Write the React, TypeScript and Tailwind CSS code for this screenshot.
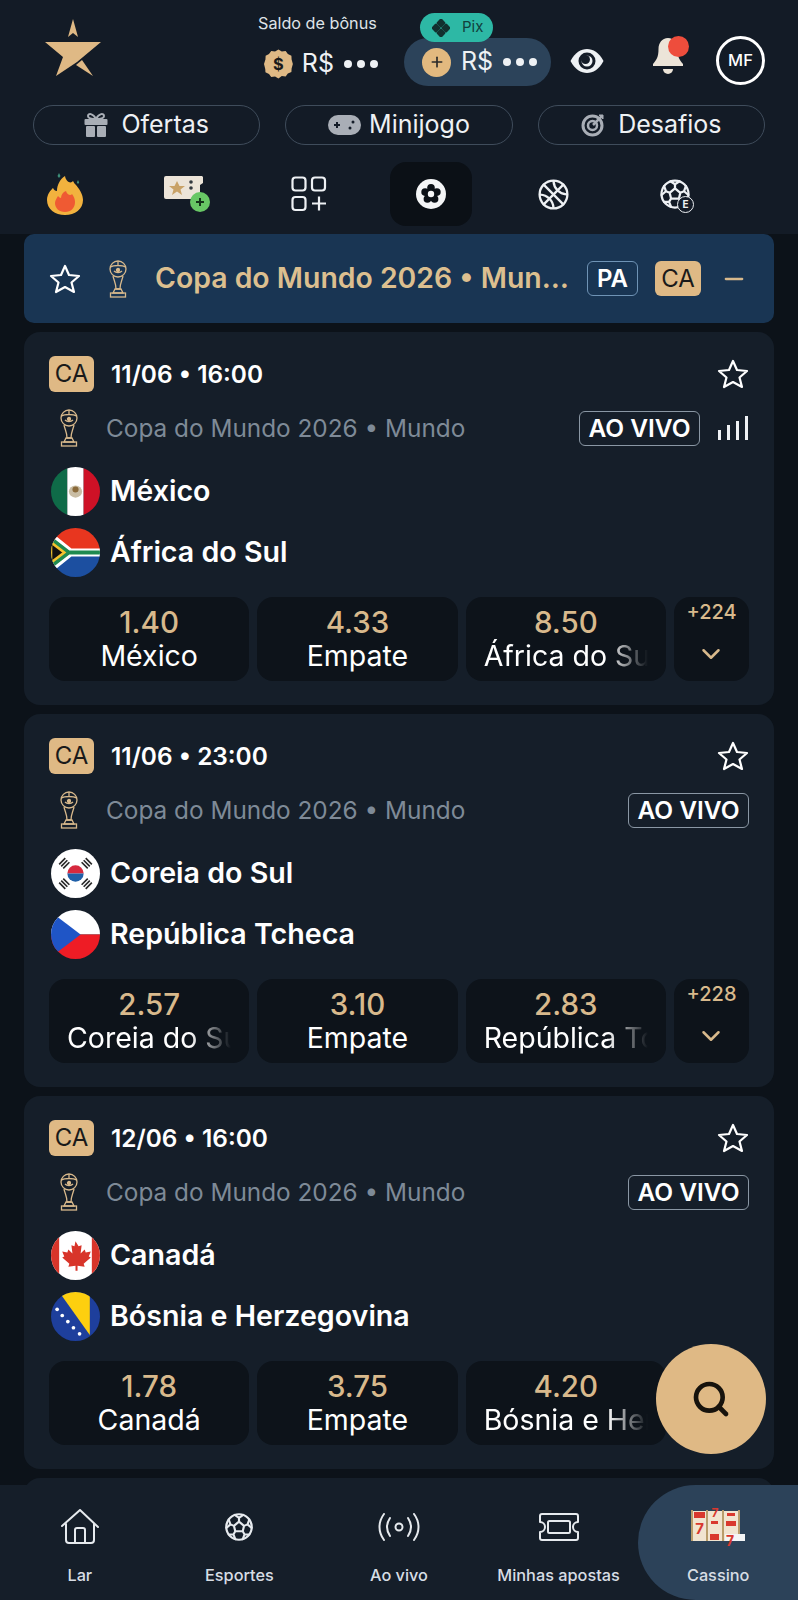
import React from "react";
import { ChevronDown, Minus, Plus, Search } from "lucide-react";
import { IoBasketballOutline, IoFootballOutline } from "react-icons/io5";

const Logo = () => (
	<svg width="58" height="58" viewBox="0 0 58 58" fill="#dfb985">
		<polygon points="29,0 34,18 29,14 24,18" />
		<polygon points="1,23 57,23 33,43 12,57 19,38" />
		<polygon points="38,41 49,57 32,46" />
	</svg>
);

const Coin = () => (
	<svg width="30" height="30" viewBox="0 0 30 30">
		<path
			d="M15 0l3.500 2 4-.6 2.300 3.300 3.700 1.600.2 4L30 15l-1.300 4.700-.2 3.500-3.700 1.600-2.300 3.300-4-.6L15 30l-3.500-2-4 .6-2.300-3.300-3.700-1.600-.2-3.500L0 15l1.500-4.700.2-4 3.500-1.600L7.500 1.400l4 .6z"
			fill="#dfb985"
		/>
		<text x="15" y="21" textAnchor="middle" fontSize="17" fontWeight="700" fill="#1a1a1a" fontFamily="Inter, sans-serif">
			$
		</text>
	</svg>
);

const Dots = () => (
	<div className="flex items-center gap-[5px]">
		<span className="w-[8px] h-[8px] rounded-full bg-[#eef1f4]" />
		<span className="w-[8px] h-[8px] rounded-full bg-[#eef1f4]" />
		<span className="w-[8px] h-[8px] rounded-full bg-[#eef1f4]" />
	</div>
);

const PixIcon = () => (
	<svg width="18" height="18" viewBox="0 0 18 18" fill="#12302f">
		<rect x="5.500" y="0.500" width="7" height="7" rx="1.500" transform="rotate(45 9 4)" />
		<rect x="5.500" y="10.500" width="7" height="7" rx="1.500" transform="rotate(45 9 14)" />
		<rect x="0.500" y="5.500" width="7" height="7" rx="1.500" transform="rotate(45 4 9)" />
		<rect x="10.500" y="5.500" width="7" height="7" rx="1.500" transform="rotate(45 14 9)" />
	</svg>
);

const Eye = () => (
	<svg width="34" height="26" viewBox="0 0 34 26">
		<path d="M0.500 13C5 4.500 11 1 17 1s12 3.500 16.500 12C29 21.500 23 25 17 25S5 21.500 0.500 13z" fill="#eef1f4" />
		<circle cx="17" cy="13" r="8.500" fill="#141c28" />
		<circle cx="17" cy="13" r="5.500" fill="#eef1f4" />
		<circle cx="15.500" cy="11.500" r="4.500" fill="#141c28" />
	</svg>
);

const Bell = () => (
	<svg width="30" height="42" viewBox="0 0 30 42">
		<path d="M15 3c6 0 9.500 5 9.500 11 0 8 2 11 5.500 15v2H0v-2c3.500-4 5.500-7 5.500-15C5.500 8 9 3 15 3z" fill="#ece4d8" />
		<path d="M10 34h10a5 5 0 0 1-10 0z" fill="#ece4d8" />
	</svg>
);

const Gift = () => (
	<svg width="24" height="24" viewBox="0 0 24 24" fill="#a9aeb6">
		<rect x="0.500" y="6" width="23" height="6" rx="1" />
		<rect x="2" y="13" width="9" height="11" rx="1" />
		<rect x="13" y="13" width="9" height="11" rx="1" />
		<path d="M12 6C9 0 4 0 4 3c0 2.500 4 3 8 3zM12 6c3-6 8-6 8-3 0 2.500-4 3-8 3z" fill="none" stroke="#a9aeb6" strokeWidth="2" />
	</svg>
);

const Gamepad = () => (
	<svg width="33" height="20" viewBox="0 0 33 20">
		<rect x="0" y="0" width="33" height="20" rx="10" fill="#a9aeb6" />
		<path d="M6 10h6M9 7v6" stroke="#141c28" strokeWidth="2" />
		<circle cx="25" cy="7" r="1.500" fill="#141c28" />
		<circle cx="22" cy="13" r="1.500" fill="#141c28" />
	</svg>
);

const Target = () => (
	<svg width="24" height="24" viewBox="0 0 24 24" fill="none" stroke="#a9aeb6">
		<circle cx="11.500" cy="12.500" r="9.500" strokeWidth="3" />
		<circle cx="11.500" cy="12.500" r="4.500" strokeWidth="2.500" />
		<path d="M12 12L21 3" strokeWidth="2.500" />
		<path d="M18 2h4v4z" fill="#a9aeb6" strokeWidth="1" />
	</svg>
);

const Flame = () => (
	<svg width="36" height="42" viewBox="0 0 36 42">
		<path d="M18 3c1 6 6 8 8 5 1 2 2 3 3 4 5 6 7 11 7 15 0 9-8 15-18 15S0 36 0 27c0-6 4-10 6-12 1 2 2 3 4 3 0-6 3-12 8-15z" fill="#f2b23e" />
		<path d="M19 18c1 4 5 5 6 3 2 3 3 5 3 8 0 6-4 10-10 10S8 35 8 30c0-3 2-5 3-7 1 1 2 2 3 2 0-3 2-6 5-7z" fill="#ef5a33" />
		<path d="M12 0l1.500 3-1.500 2-1.500-2zM31 7l1.200 2.500-1.200 1.500-1.200-1.500z" fill="#3d8f7a" />
	</svg>
);

const Tickets = () => (
	<svg width="46" height="36" viewBox="0 0 46 36">
		<path d="M2 0h36l1 1v6l-3 2v14H2a2 2 0 0 1-2-2V2a2 2 0 0 1 2-2z" fill="#ece4d8" />
		<polygon points="13,5 15.500,10 21,10 16.500,13.500 18,19 13,15.500 8,19 9.500,13.500 5,10 10.500,10" fill="#c9a267" />
		<circle cx="27" cy="6" r="1.800" fill="#33393f" />
		<circle cx="27" cy="12" r="1.800" fill="#33393f" />
		<circle cx="36" cy="26" r="10" fill="#68c765" />
		<path d="M32 26h8M36 22v8" stroke="#14331a" strokeWidth="2" />
	</svg>
);

const Grid = () => (
	<svg width="36" height="36" viewBox="0 0 36 36" fill="none" stroke="#eef1f4" strokeWidth="2.200">
		<rect x="1.500" y="1.500" width="13" height="13" rx="3" />
		<rect x="21" y="1.500" width="13" height="13" rx="3" />
		<rect x="1.500" y="21" width="13" height="13" rx="3" />
		<path d="M21 27.500h14M28 20.500v14" />
	</svg>
);

const SoccerSolid = () => (
	<svg width="30" height="30" viewBox="0 0 30 30">
		<circle cx="15" cy="15" r="15" fill="#f4f5f6" />
		<g fill="#0b1016">
			<circle cx="15" cy="15" r="6.500" />
			<circle cx="15" cy="8.800" r="3.800" />
			<circle cx="20.900" cy="13.100" r="3.800" />
			<circle cx="18.600" cy="20" r="3.800" />
			<circle cx="11.400" cy="20" r="3.800" />
			<circle cx="9.100" cy="13.100" r="3.800" />
		</g>
		<circle cx="15" cy="15" r="3.200" fill="#f4f5f6" />
	</svg>
);

const SoccerE = () => (
	<div className="relative w-[36px] h-[36px]">
		<IoFootballOutline size={36} color="#eef1f4" />
		<div className="absolute right-[-1px] bottom-[-1px] w-[17px] h-[17px] rounded-full bg-[#141c28] border border-[#eef1f4] flex items-center justify-center text-[10px] font-bold text-[#eef1f4]">
			E
		</div>
	</div>
);

const Trophy = ({ color = "#d8b98c" }: { color?: string }) => (
	<svg width="20" height="38" viewBox="0 0 20 38" fill="none" stroke={color} strokeWidth="1.300">
		<circle cx="10" cy="9" r="8" />
		<path d="M2.500 7c3-2 12-2 15 0M6 11c2 2 6 2 8 0M10 1v4" />
		<circle cx="10" cy="10" r="1.500" fill={color} />
		<path d="M5 16c1 5 3 7 3 13h4c0-6 2-8 3-13" />
		<path d="M7 29h6l2 4H5z" />
		<rect x="2.500" y="33" width="15" height="4" />
	</svg>
);

const StarIcon = () => (
	<svg width="32" height="30" viewBox="0 0 32 30" fill="none" stroke="#ffffff" strokeWidth="2.200" strokeLinejoin="round">
		<polygon points="16,2 20,11 30,12 22.500,18.500 25,28 16,23 7,28 9.500,18.500 2,12 12,11" />
	</svg>
);

const Signal = () => (
	<div className="flex items-end gap-[6px] h-[24px]">
		<span className="w-[3px] h-[10px] bg-[#eef1f4]" />
		<span className="w-[3px] h-[15px] bg-[#eef1f4]" />
		<span className="w-[3px] h-[19px] bg-[#eef1f4]" />
		<span className="w-[3px] h-[24px] bg-[#eef1f4]" />
	</div>
);

const Mexico = () => (
	<svg viewBox="0 0 48 48" className="w-full h-full">
		<rect width="16" height="48" fill="#0f6b48" />
		<rect x="16" width="16" height="48" fill="#ffffff" />
		<rect x="32" width="16" height="48" fill="#ce1126" />
		<ellipse cx="24" cy="24" rx="6.500" ry="6" fill="#c9bda4" />
		<circle cx="24" cy="22" r="3" fill="#8a6a3a" />
	</svg>
);

const SouthAfrica = () => (
	<svg viewBox="0 0 48 48" className="w-full h-full">
		<rect width="48" height="24" fill="#e8361f" />
		<rect y="24" width="48" height="24" fill="#1c4fa0" />
		<path d="M0 4l20 16h28v8H20L0 44z" fill="#ffffff" />
		<path d="M0 8l18 14h30v4H18L0 40z" fill="#1f8a50" />
		<path d="M0 14l13 10L0 34z" fill="#111111" stroke="#f5c22e" strokeWidth="2.500" />
	</svg>
);

const Korea = () => (
	<svg viewBox="0 0 48 48" className="w-full h-full">
		<rect width="48" height="48" fill="#ffffff" />
		<path d="M16 24a8 8 0 0 1 16 0z" fill="#d6293e" />
		<path d="M16 24a8 8 0 0 0 16 0z" fill="#1f5fa8" />
		<g stroke="#2a2a2a" strokeWidth="1.600">
			<path d="M8 15l6-6M10 17l6-6M12 19l6-6" />
			<path d="M30 13l6 6M32 11l6 6M34 9l6 6" />
			<path d="M8 33l6 6M10 31l6 6M12 29l6 6" />
			<path d="M30 35l6-6M32 37l6-6M34 39l6-6" />
		</g>
	</svg>
);

const Czech = () => (
	<svg viewBox="0 0 48 48" className="w-full h-full">
		<rect width="48" height="24" fill="#ffffff" />
		<rect y="24" width="48" height="24" fill="#ee1c25" />
		<path d="M0 2l29 22L0 46z" fill="#1f55c6" />
	</svg>
);

const Canada = () => (
	<svg viewBox="0 0 48 48" className="w-full h-full">
		<rect width="48" height="48" fill="#ffffff" />
		<rect width="8" height="48" fill="#d8352a" />
		<rect x="40" width="8" height="48" fill="#d8352a" />
		<path d="M24 10l3 5 3-1-1 8 4-4 1 3 5-1-2 5 2 1-7 6 1 3-7-1v5h-2v-5l-7 1 1-3-7-6 2-1-2-5 5 1 1-3 4 4-1-8 3 1z" fill="#d8352a" />
	</svg>
);

const Bosnia = () => (
	<svg viewBox="0 0 48 48" className="w-full h-full">
		<rect width="48" height="48" fill="#1e3f9c" />
		<path d="M8 0h30v42z" fill="#fdcf0f" />
		<g fill="#ffffff">
			<circle cx="6" cy="17" r="1.800" />
			<circle cx="11" cy="23" r="1.800" />
			<circle cx="16.500" cy="29" r="1.800" />
			<circle cx="22" cy="35" r="1.800" />
			<circle cx="28" cy="41" r="1.800" />
		</g>
	</svg>
);

const House = () => (
	<svg width="38" height="36" viewBox="0 0 38 36" fill="none" stroke="#e6eaee" strokeWidth="2" strokeLinecap="round" strokeLinejoin="round">
		<path d="M1 17L19 1l18 17" />
		<path d="M5 15v16a3 3 0 0 0 3 3h22a3 3 0 0 0 3-3V15" />
		<path d="M14 34V21a2 2 0 0 1 2-2h6a2 2 0 0 1 2 2v13" />
	</svg>
);

const Live = () => (
	<svg width="42" height="28" viewBox="0 0 42 28" fill="none" stroke="#e6eaee" strokeWidth="2" strokeLinecap="round">
		<path d="M6 1C0 9 0 19 6 27M12 5c-4 6-4 12 0 18M36 1c6 8 6 18 0 26M30 5c4 6 4 12 0 18" />
		<circle cx="21" cy="14" r="3.500" />
	</svg>
);

const Ticket = () => (
	<svg width="42" height="28" viewBox="0 0 42 28" fill="none" stroke="#e6eaee" strokeWidth="2" strokeLinejoin="round">
		<path d="M4 1h34a2 2 0 0 1 2 2v6a5 5 0 0 0 0 10v6a2 2 0 0 1-2 2H4a2 2 0 0 1-2-2v-6a5 5 0 0 0 0-10V3a2 2 0 0 1 2-2z" />
		<rect x="10" y="8" width="22" height="12" rx="1.500" />
	</svg>
);

const Slots = () => (
	<svg width="54" height="40" viewBox="0 0 54 40">
		<rect x="0" y="4" width="48" height="30" fill="#f1e4d0" />
		<rect x="0" y="3" width="2" height="31" fill="#b99d6b" />
		<rect x="15" y="3" width="2" height="31" fill="#b99d6b" />
		<rect x="31" y="3" width="2" height="31" fill="#b99d6b" />
		<rect x="47" y="3" width="2" height="31" fill="#b99d6b" />
		<g fill="#d9382e">
			<rect x="3" y="5" width="11" height="6" />
			<rect x="20" y="14" width="7" height="3" />
			<rect x="36" y="6" width="8" height="3" />
			<rect x="35" y="14" width="10" height="5" />
			<rect x="19" y="27" width="9" height="6" />
		</g>
		<text x="8.500" y="27" textAnchor="middle" fontSize="15" fontWeight="700" fill="#d9382e" fontFamily="Inter, sans-serif">
			7
		</text>
		<text x="24" y="10" textAnchor="middle" fontSize="12" fontWeight="700" fill="#d9382e" fontFamily="Inter, sans-serif">
			7
		</text>
		<rect x="34" y="27" width="20" height="7" fill="#f4f5f6" />
		<text x="39" y="39" textAnchor="middle" fontSize="14" fontWeight="700" fill="#d9382e" fontFamily="Inter, sans-serif">
			7
		</text>
	</svg>
);

const matches = [
	{
		date: "11/06 • 16:00",
		live: true,
		home: "México",
		away: "África do Sul",
		homeFlag: <Mexico />,
		awayFlag: <SouthAfrica />,
		odds: [
			{ value: "1.40", label: "México" },
			{ value: "4.33", label: "Empate" },
			{ value: "8.50", label: "África do Sul", fade: true },
		],
		more: "+224",
	},
	{
		date: "11/06 • 23:00",
		live: false,
		home: "Coreia do Sul",
		away: "República Tcheca",
		homeFlag: <Korea />,
		awayFlag: <Czech />,
		odds: [
			{ value: "2.57", label: "Coreia do Sul", fade: true },
			{ value: "3.10", label: "Empate" },
			{ value: "2.83", label: "República Tcheca", fade: true },
		],
		more: "+228",
	},
	{
		date: "12/06 • 16:00",
		live: false,
		home: "Canadá",
		away: "Bósnia e Herzegovina",
		homeFlag: <Canada />,
		awayFlag: <Bosnia />,
		odds: [
			{ value: "1.78", label: "Canadá" },
			{ value: "3.75", label: "Empate" },
			{ value: "4.20", label: "Bósnia e Herzegovina", fade: true },
		],
		more: "+230",
	},
];

const MatchCard = ({ data }: { data: (typeof matches)[number] }) => (
	<div className="mx-[24px] w-[750px] shrink-0 rounded-[16px] bg-[#151e29] px-[25px] pt-[24px] pb-[24px]">
		<div className="flex items-center h-[36px]">
			<span className="w-[45px] h-[36px] rounded-[6px] bg-[#dfb985] text-[#1a1a1a] text-[24px] flex items-center justify-center">
				CA
			</span>
			<span className="ml-[17px] text-[24.400px] font-semibold text-white">{data.date}</span>
			<div className="ml-auto">
				<StarIcon />
			</div>
		</div>
		<div className="flex items-center h-[34px] mt-[19px]">
			<div className="w-[40px] flex justify-center">
				<Trophy />
			</div>
			<span className="ml-[17px] text-[24.350px] text-[#7e8a97]">Copa do Mundo 2026 • Mundo</span>
			<span className="ml-auto w-[121px] h-[35px] rounded-[6px] border border-[#8a97a4] text-white text-[24.500px] font-semibold flex items-center justify-center">
				AO VIVO
			</span>
			{data.live && (
				<div className="ml-[18px] mr-[1px]">
					<Signal />
				</div>
			)}
		</div>
		<div className="flex items-center h-[49px] mt-[22px]">
			<div className="w-[49px] h-[49px] rounded-full overflow-hidden ml-[2px]">{data.homeFlag}</div>
			<span className="ml-[10px] text-[28.600px] font-semibold text-white">{data.home}</span>
		</div>
		<div className="flex items-center h-[49px] mt-[12px]">
			<div className="w-[49px] h-[49px] rounded-full overflow-hidden ml-[2px]">{data.awayFlag}</div>
			<span className="ml-[10px] text-[28.600px] font-semibold text-white">{data.away}</span>
		</div>
		<div className="flex gap-[8px] mt-[20px] h-[84px]">
			{data.odds.map((odd, index) => (
				<div key={index} className="flex-1 min-w-0 rounded-[16px] bg-[#0d131a] px-[18px] pt-[9px] text-center">
					<div className="text-[29.500px] leading-[33px] font-medium text-[#d8b98c]">{odd.value}</div>
					<div
						className={`text-[28.500px] leading-[33px] text-white whitespace-nowrap overflow-hidden ${
							odd.fade ? "[mask-image:linear-gradient(to_right,#000_75%,transparent_100%)]" : ""
						}`}>
						{odd.label}
					</div>
				</div>
			))}
			<div className="w-[75px] shrink-0 rounded-[16px] bg-[#0d131a] flex flex-col items-center pt-[3px]">
				<span className="text-[20px] leading-[24px] font-medium text-[#d8b98c]">{data.more}</span>
				<ChevronDown className="mt-[15px]" size={30} color="#d8b98c" strokeWidth={2} />
			</div>
		</div>
	</div>
);

const PillButton = ({ icon, label, tight }: { icon: React.ReactNode; label: string; tight?: boolean }) => (
	<div
		className={`w-[228px] h-[40px] rounded-full border border-[#3f4c5b] flex items-center justify-center text-[25px] text-[#eef1f4] ${
			tight ? "gap-[8px]" : "gap-[13px]"
		}`}>
		{icon}
		<span>{label}</span>
	</div>
);

const NavItem = ({ icon, label, active }: { icon: React.ReactNode; label: string; active?: boolean }) => (
	<div
		className={`flex-1 flex flex-col items-center pt-[22px] ${
			active ? "bg-[#2c4259] rounded-tl-[70px] rounded-bl-[70px]" : ""
		}`}>
		<div className="h-[40px] flex items-center justify-center">{icon}</div>
		<span className="mt-[16px] text-[16.300px] leading-[24px] font-medium text-[#d7dde4] whitespace-nowrap">{label}</span>
	</div>
);

const App = () => {
	return (
		<div className="relative w-[798px] h-[1600px] overflow-hidden flex flex-col bg-[#0c1219] [font-family:Inter,sans-serif]">
			<header className="h-[234px] shrink-0 bg-[#131b26]">
				<div className="flex items-start h-[105px] pl-[44px]">
					<div className="mt-[19px] w-[58px]">
						<Logo />
					</div>
					<div className="ml-[156px] mt-[13px] w-[120px]">
						<div className="text-[16.200px] leading-[20px] text-[#dfe3e8] whitespace-nowrap">Saldo de bônus</div>
						<div className="flex items-center mt-[16px] ml-[6px] h-[30px]">
							<Coin />
							<span className="ml-[9px] text-[25px] text-[#eef1f4]">R$</span>
							<div className="ml-[10px]">
								<Dots />
							</div>
						</div>
					</div>
					<div className="relative ml-[26px] mt-[38px] w-[147px] h-[48px] rounded-full bg-[#2c435a] flex items-center pl-[18px]">
						<div className="absolute left-[16px] top-[-25px] w-[73px] h-[29px] rounded-full bg-[#2db8a5] flex items-center pl-[12px] gap-[12px] text-[15px] text-[#12403c]">
							<PixIcon />
							<span>Pix</span>
						</div>
						<div className="w-[29px] h-[29px] rounded-full bg-[#e2b97f] flex items-center justify-center">
							<Plus size={16} color="#2a2a2a" strokeWidth={2.500} />
						</div>
						<span className="ml-[10px] text-[25px] text-[#eef1f4]">R$</span>
						<div className="ml-[10px]">
							<Dots />
						</div>
					</div>
					<div className="ml-[19px] mt-[48px] w-[34px]">
						<Eye />
					</div>
					<div className="relative ml-[49px] mt-[35px] w-[30px]">
						<Bell />
						<span className="absolute left-[15px] top-[1px] w-[21px] h-[21px] rounded-full bg-[#ee4d3c]" />
					</div>
					<div className="ml-[33px] mt-[36px] w-[49px] h-[49px] rounded-full border-[3px] border-white flex items-center justify-center text-[16.500px] font-medium text-white">
						MF
					</div>
				</div>
				<div className="flex gap-[25px] px-[33px]">
					<PillButton icon={<Gift />} label="Ofertas" />
					<PillButton icon={<Gamepad />} label="Minijogo" tight />
					<PillButton icon={<Target />} label="Desafios" />
				</div>
				<div className="grid grid-cols-[repeat(6,122px)] pl-[4px] mt-[17px] h-[64px]">
					<div className="flex items-center justify-center">
						<Flame />
					</div>
					<div className="flex items-center justify-center">
						<Tickets />
					</div>
					<div className="flex items-center justify-center">
						<Grid />
					</div>
					<div className="flex items-center justify-center">
						<div className="w-[82px] h-[64px] rounded-[16px] bg-[#0b1016] flex items-center justify-center">
							<SoccerSolid />
						</div>
					</div>
					<div className="flex items-center justify-center">
						<IoBasketballOutline size={37} color="#eef1f4" />
					</div>
					<div className="flex items-center justify-center">
						<SoccerE />
					</div>
				</div>
			</header>

			<main className="flex-1 min-h-0 overflow-hidden flex flex-col gap-[9px]">
				<div className="mx-[24px] w-[750px] h-[89px] shrink-0 rounded-[10px] bg-[#193553] flex items-center pl-[25px]">
					<StarIcon />
					<div className="ml-[27px]">
						<Trophy />
					</div>
					<span className="ml-[27px] w-[414px] text-[28.400px] font-semibold text-[#dcbf8f] whitespace-nowrap overflow-hidden text-ellipsis">
						Copa do Mundo 2026 • Mundo
					</span>
					<span className="ml-[18px] w-[51px] h-[35px] rounded-[6px] border border-[#6f93b5] text-white text-[24px] font-semibold flex items-center justify-center">
						PA
					</span>
					<span className="ml-[17px] w-[46px] h-[35px] rounded-[6px] bg-[#dfb985] text-[#1a1a1a] text-[24px] flex items-center justify-center">
						CA
					</span>
					<Minus className="ml-[19px]" size={28} color="#d8b98c" strokeWidth={2} />
				</div>
				{matches.map((match, index) => (
					<MatchCard key={index} data={match} />
				))}
				<div className="mx-[24px] w-[750px] h-[373px] shrink-0 rounded-[16px] bg-[#151e29]" />
			</main>

			<nav className="h-[115px] shrink-0 bg-[#151e29] flex">
				<NavItem icon={<House />} label="Lar" />
				<NavItem icon={<IoFootballOutline size={34} color="#e6eaee" />} label="Esportes" />
				<NavItem icon={<Live />} label="Ao vivo" />
				<NavItem icon={<Ticket />} label="Minhas apostas" />
				<NavItem icon={<Slots />} label="Cassino" active />
			</nav>

			<button className="absolute left-[656px] top-[1344px] w-[110px] h-[110px] rounded-full bg-[#dfb985] flex items-center justify-center">
				<Search size={40} color="#17130d" strokeWidth={2.800} />
			</button>
		</div>
	);
};

export default App;
